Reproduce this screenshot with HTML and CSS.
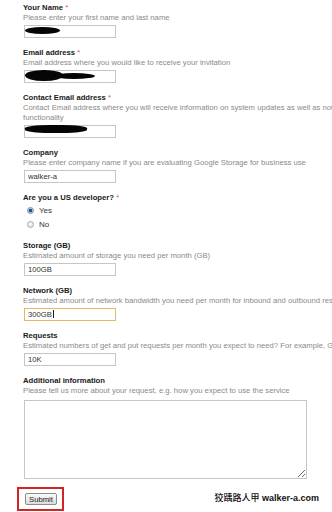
FILE: index.html
```html
<!DOCTYPE html>
<html lang="en">
<head>
    <meta charset="UTF-8">
    <meta name="viewport" content="width=device-width, initial-scale=1.0">
    <title>Google Storage sign up</title>
    <link rel="stylesheet" href="styles.css">
</head>
<body>

    <div class="form">

        <div class="field">
            <div class="label">Your Name <span class="req">*</span></div>
            <div class="hint">Please enter your first name and last name</div>
            <div class="redacted">
                <input class="text" type="text">
                <span class="blob blob-name"></span>
            </div>
        </div>

        <div class="field">
            <div class="label">Email address <span class="req">*</span></div>
            <div class="hint">Email address where you would like to receive your invitation</div>
            <div class="redacted">
                <input class="text" type="text">
                <span class="blob blob-email"></span>
                <span class="blob blob-email-tail"></span>
            </div>
        </div>

        <div class="field">
            <div class="label">Contact Email address <span class="req">*</span></div>
            <div class="hint">Contact Email address where you will receive information on system updates as well as notifications of new functionality</div>
            <div class="redacted">
                <input class="text" type="text">
                <span class="blob blob-contact"></span>
            </div>
        </div>

        <div class="field">
            <div class="label">Company</div>
            <div class="hint">Please enter company name if you are evaluating Google Storage for business use</div>
            <input class="text" type="text" value="walker-a">
        </div>

        <div class="field">
            <div class="label">Are you a US developer? <span class="req">*</span></div>
            <div class="choice"><span class="radio checked"></span>Yes</div>
            <div class="choice"><span class="radio"></span>No</div>
        </div>

        <div class="field">
            <div class="label">Storage (GB)</div>
            <div class="hint">Estimated amount of storage you need per month (GB)</div>
            <input class="text" type="text" value="100GB">
        </div>

        <div class="field">
            <div class="label">Network (GB)</div>
            <div class="hint">Estimated amount of network bandwidth you need per month for inbound and outbound resources</div>
            <div class="text focus">300GB<span class="caret"></span></div>
        </div>

        <div class="field">
            <div class="label">Requests</div>
            <div class="hint">Estimated numbers of get and put requests per month you expect to need? For example, GET 10K</div>
            <input class="text" type="text" value="10K">
        </div>

        <div class="field last">
            <div class="label">Additional information</div>
            <div class="hint">Please tell us more about your request, e.g. how you expect to use the service</div>
            <textarea class="area"></textarea>
        </div>

        <!-- Submit, with the red highlight box -->
        <div class="actions">
            <div class="mark">
                <button class="submit">Submit</button>
            </div>
            <div class="credit"><span class="credit-cjk">狡踽路人甲</span> walker-a.com</div>
        </div>

    </div>

</body>
</html>
```

FILE: styles.css
```css
html, body {
    overflow: hidden;
}

body {
    margin: 0;
    background-color: #fff;
    font-family: "Liberation Sans", Arial, sans-serif;
    font-size: 7.7px;
    color: #222;
}

.form {
    width: 385px;
    padding: 3px 0 0 23px;
}

.field {
    margin-bottom: 10px;
}

.field.last {
    margin-bottom: 0;
}

.label {
    font-weight: bold;
    line-height: 10px;
    color: #1a1a1a;
}

.req {
    color: #e05a5a;
    font-weight: normal;
}

.hint {
    color: #8a8a8a;
    line-height: 10px;
}

.text {
    display: block;
    box-sizing: border-box;
    width: 92px;
    height: 13px;
    margin: 2px 0 0 1px;
    padding: 0 3px;
    border: 1px solid #c6c6c6;
    font-family: inherit;
    font-size: 7.7px;
    line-height: 11px;
    color: #333;
    background-color: #fff;
}

.text.focus {
    border-color: #e2b867;
}

.caret {
    display: inline-block;
    width: 1px;
    height: 8px;
    margin-left: 1px;
    vertical-align: -1px;
    background-color: #222;
}

/* black scribbles over the private values */
.redacted {
    position: relative;
}

.blob {
    position: absolute;
    background-color: #050505;
    border-radius: 50%;
}

.blob-name {
    left: 2px;
    top: 2px;
    width: 35px;
    height: 7px;
}

.blob-email {
    left: 2px;
    top: 0;
    width: 38px;
    height: 11px;
}

.blob-email-tail {
    left: 30px;
    top: 3px;
    width: 42px;
    height: 6px;
}

.blob-contact {
    left: 2px;
    top: 0;
    width: 62px;
    height: 8px;
    border-radius: 40%;
}

.choice {
    display: flex;
    align-items: center;
    gap: 5px;
    height: 14px;
    padding-left: 4px;
    font-size: 8px;
    color: #333;
}

.radio {
    box-sizing: border-box;
    width: 7px;
    height: 7px;
    border: 1px solid #a9a9a9;
    border-radius: 50%;
    background: radial-gradient(circle at 50% 40%, #fff, #d9d9d9);
}

.radio.checked {
    border-color: #7d8ea6;
    background: radial-gradient(circle, #22509a 0 1.4px, #c9d9ee 2.2px);
}

.area {
    display: block;
    box-sizing: border-box;
    width: 283px;
    height: 79px;
    margin: 4px 0 0 1px;
    border: 1px solid #c6c6c6;
    padding: 2px;
    font-family: inherit;
    font-size: 7.7px;
}

.actions {
    display: flex;
    justify-content: space-between;
    align-items: center;
    width: 302px;
    margin: 8px 0 0 -6px;
}

.mark {
    border: 2px solid #d52424;
    padding: 4px 5px 4px 6px;
}

.submit {
    display: block;
    box-sizing: border-box;
    width: 32px;
    height: 12px;
    padding: 0;
    border: 1px solid #8c8c8c;
    border-radius: 2px;
    background: linear-gradient(#fafafa, #dcdcdc);
    font-family: inherit;
    font-size: 7.7px;
    color: #222;
}

.credit {
    margin-bottom: 4px;
    font-family: "Liberation Sans", "Noto Sans CJK TC", sans-serif;
    font-size: 9px;
    font-weight: bold;
    color: #111;
}

.credit-cjk {
    font-weight: 500;
}
```
